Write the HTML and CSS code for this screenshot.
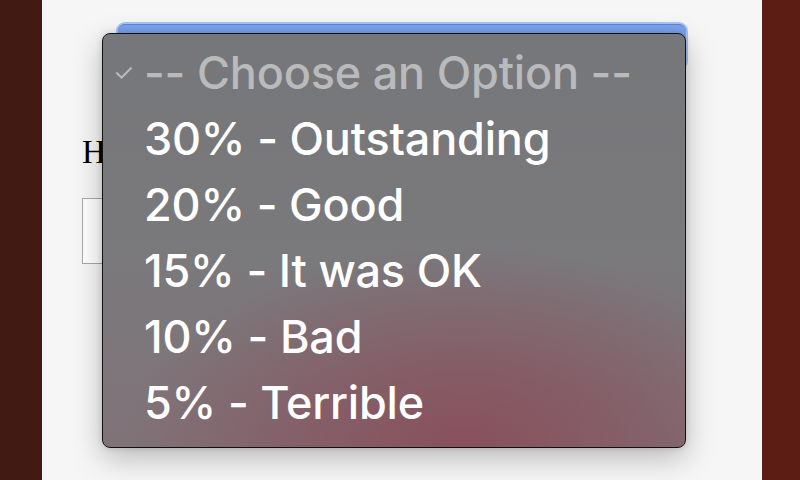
FILE: index.html
```html
<!DOCTYPE html>
<html>
<head>
<meta charset="utf-8">
<link rel="stylesheet" href="styles.css">
</head>
<body>
<div class="page">
  <div class="select-wrap"><div class="select"></div></div>
  <h2 class="heading">How was the service?</h2>
  <div class="input"></div>
</div>
<div class="menu">
  <div class="option placeholder"><span class="check">✓</span>-- Choose an Option --</div>
  <div class="option">30% - Outstanding</div>
  <div class="option">20% - Good</div>
  <div class="option">15% - It was OK</div>
  <div class="option">10% - Bad</div>
  <div class="option">5% - Terrible</div>
</div>
</body>
</html>
```
FILE: styles.css
```css
html, body {
  margin: 0;
  height: 480px;
  overflow: hidden;
}
body {
  background: linear-gradient(90deg, #411a14 0%, #5c1d14 100%);
  font-family: "Liberation Serif", serif;
}
.page {
  margin-left: 42px;
  width: 720px;
  height: 480px;
  background: #f6f6f6;
  padding: 24px 40px 0 40px;
  box-sizing: border-box;
}
.select-wrap {
  margin-left: 36px;
  width: 568px;
  height: 44px;
}
.select {
  height: 44px;
  border-radius: 7px;
  background: #7ba3ee;
  border-top: 1px solid #5b86d8;
  box-sizing: border-box;
  box-shadow: 0 0 0 2px #a9c4f5;
}
.heading {
  margin: 66px 0 0 0;
  font-size: 33px;
  font-weight: normal;
  line-height: 36px;
  color: #000;
}
.input {
  margin-top: 28px;
  width: 200px;
  height: 64px;
  border: 1px solid #a9a9a9;
  background: #fff;
}
.menu {
  position: absolute;
  left: 102px;
  top: 33px;
  width: 582px;
  height: 407px;
  border: 1px solid #111;
  border-radius: 8px;
  background:
    radial-gradient(ellipse 340px 200px at 62% 100%, rgba(136, 80, 92, 1) 0%, rgba(136, 80, 92, 0.6) 45%, rgba(136, 80, 92, 0) 100%),
    linear-gradient(180deg, #76777a 0%, #7a797c 55%, #807378 100%);
  box-shadow: 0 10px 30px rgba(0, 0, 0, 0.25), 0 0 6px rgba(0, 0, 0, 0.15);
  padding-top: 6px;
  box-sizing: content-box;
  font-family: Inter, "Liberation Sans", sans-serif;
}
.option {
  position: relative;
  padding-left: 41px;
  height: 66px;
  line-height: 66px;
  font-size: 45px;
  font-weight: 450;
  color: #fff;
  letter-spacing: -0.2px;
  white-space: nowrap;
}
.placeholder {
  color: #b9babc;
}
.check {
  position: absolute;
  left: 10px;
  top: 0;
  font-size: 24px;
  font-weight: 400;
  color: #b9babc;
}
```
